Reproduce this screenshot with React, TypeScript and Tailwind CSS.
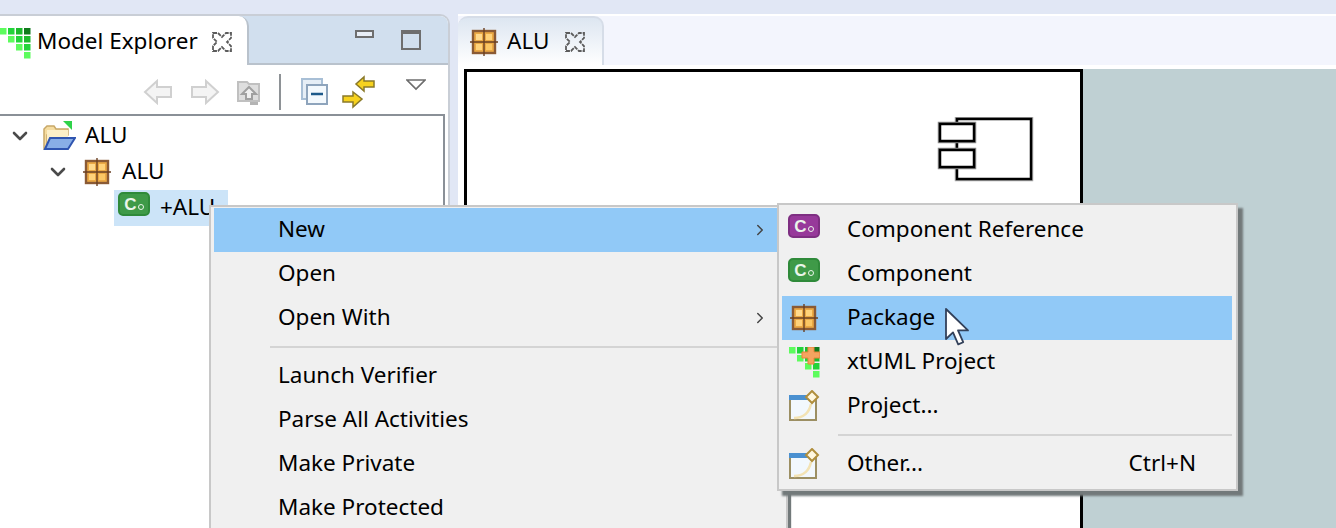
import { ChevronDown, ChevronRight } from 'lucide-react';

const uiFont = "font-['Noto_Sans',sans-serif]";

function CloseIcon({ size = 20 }: { size?: number }) {
  return (
    <svg width={size} height={size} viewBox="0 0 20 20" className="shrink-0">
      <polygon
        points="1,1 6,1 10,5 14,1 19,1 19,6 15,10 19,14 19,19 14,19 10,15 6,19 1,19 1,14 5,10 1,6"
        fill="none"
        stroke="#5c5c5c"
        strokeWidth="1.8"
        strokeDasharray="4 1"
      />
    </svg>
  );
}

function PackageIcon() {
  return (
    <svg width="28" height="28" viewBox="0 0 28 28" className="shrink-0">
      <rect x="3" y="3" width="22" height="22" fill="#eba945" stroke="#8a5a35" strokeWidth="2.4" />
      <rect x="6" y="6" width="6" height="6" fill="#ffd98c" />
      <rect x="16" y="6" width="6" height="6" fill="#ffd27a" />
      <rect x="6" y="16" width="6" height="6" fill="#ffd27a" />
      <rect x="16" y="16" width="6" height="6" fill="#fbc765" />
      <path d="M14 0v28M0 14h28" stroke="#6a3f22" strokeWidth="1.4" />
    </svg>
  );
}

function ComponentIcon({ color, edge }: { color: string; edge: string }) {
  const cls = color === 'green' ? 'bg-[#3f9a48]' : 'bg-[#97399a]';
  return (
    <div className={`flex h-[24px] w-[32px] shrink-0 items-center justify-center gap-[1px] rounded-[5px] border-2 ${cls}`} style={{ borderColor: edge }}>
      <span className="font-['Liberation_Sans',sans-serif] text-[17px] leading-none font-bold text-[#eaf5ea]">C</span>
      <span className="mt-[6px] h-[6px] w-[6px] rounded-full border border-[#eaf5ea]" />
    </div>
  );
}

function ModelDots({ plus }: { plus?: boolean }) {
  const cells = [
    [0, 0, '#5dfc5d'], [8, 0, '#22d43a'], [16, 0, '#1cba2c'], [24, 0, '#0f7a1c'],
    [8, 8, '#5dfc5d'], [16, 8, '#22d43a'], [24, 8, '#1cba2c'],
    [16, 16, '#5dfc5d'], [24, 16, '#22d43a'],
    [24, 24, '#5dfc5d'],
  ] as const;
  return (
    <svg width="31" height="31" viewBox="0 0 31 31" className="shrink-0">
      {cells.map(([x, y, fill], i) => (
        <rect key={i} x={x} y={y} width="6.5" height="6.5" fill={fill} />
      ))}
      {plus && <path d="M19 0h6v5h6v6h-6v6h-6v-6h-6V5h6z" fill="#f4a460" stroke="#e8843a" strokeWidth="1" />}
    </svg>
  );
}

function NewWindowIcon() {
  return (
    <svg width="32" height="32" viewBox="0 0 32 32" className="shrink-0">
      <rect x="2" y="6" width="26" height="24" fill="#f2f8fd" stroke="#9c8f63" strokeWidth="2" />
      <rect x="1" y="5" width="27" height="5" fill="#4a90d0" />
      <path d="M6 28c10 0 15-5 17-14" stroke="#f3e3b4" strokeWidth="2.5" fill="none" />
      <path d="M24 1l6 6-6 6-6-6z" fill="#fff7df" stroke="#b08e3c" strokeWidth="2" />
    </svg>
  );
}

function FolderIcon() {
  return (
    <svg width="34" height="30" viewBox="0 0 34 30" className="shrink-0">
      <path d="M2 8l3-3h7l2 3h12v6H5v14H2z" fill="#f5dca0" stroke="#c8a868" strokeWidth="1.5" />
      <path d="M5 9h21v12H5z" fill="#fcefc8" />
      <path d="M3 28l5-11h25l-7 11z" fill="#88aee6" stroke="#2f55b0" strokeWidth="2" />
      <path d="M21 0h9v9z" fill="#2fd24a" />
    </svg>
  );
}

function Toolbar() {
  return (
    <div className="flex h-[49px] items-center bg-white pt-[4px] pl-[143px]">
      <svg width="30" height="26" viewBox="0 0 30 26" className="shrink-0">
        <path d="M14 2L2 13l12 11v-6h14V8H14z" fill="#f4f4f4" stroke="#d0d0d0" strokeWidth="2" />
      </svg>
      <svg width="30" height="26" viewBox="0 0 30 26" className="ml-[17px] shrink-0">
        <path d="M16 2l12 11-12 11v-6H2V8h14z" fill="#f4f4f4" stroke="#d0d0d0" strokeWidth="2" />
      </svg>
      <svg width="26" height="28" viewBox="0 0 26 28" className="ml-[16px] shrink-0">
        <path d="M2 4h9l2 2h10v17H2z" fill="#dedede" stroke="#c0c0c0" strokeWidth="2" />
        <path d="M13 9l7 7h-4v5h-6v-5H6z" fill="#efefef" stroke="#a0a0a0" strokeWidth="2" />
        <path d="M14 24h8v3h-8z" fill="#b4b4b4" />
      </svg>
      <div className="ml-[17px] h-[36px] w-[2px] bg-[#8e9296]" />
      <svg width="27" height="27" viewBox="0 0 27 27" className="ml-[20px] shrink-0">
        <rect x="1" y="1" width="20" height="20" fill="#e6eef6" stroke="#a8bfd6" strokeWidth="2" />
        <rect x="6" y="7" width="20" height="19" fill="#f4f9fd" stroke="#8ea4bc" strokeWidth="2" />
        <path d="M10 16h12" stroke="#1e5a8a" strokeWidth="2.5" />
      </svg>
      <svg width="34" height="34" viewBox="0 0 34 34" className="ml-[14px] shrink-0">
        <path d="M22 2v4h10v6H22v4l-8-7z" fill="#f7d21e" stroke="#8a7a2a" strokeWidth="1.5" />
        <path d="M11 17v4H1v6h10v5l9-8z" fill="#f7d21e" stroke="#8a7a2a" strokeWidth="1.5" />
      </svg>
      <svg width="20" height="12" viewBox="0 0 20 12" className="mb-[14px] ml-[30px] shrink-0">
        <path d="M1 1h18L10 10z" fill="#fff" stroke="#6e6e6e" strokeWidth="1.6" />
      </svg>
    </div>
  );
}

function ExplorerPanel() {
  return (
    <div className="flex w-[450px] shrink-0 flex-col overflow-hidden rounded-tr-[10px] border-t-2 border-r-2 border-[#c9ced6] bg-white">
      <div className="flex h-[49px] shrink-0 bg-[#d1dfee]">
        <div className="flex w-[249px] items-center rounded-tr-[10px] border-r-2 border-[#b9c2cc] bg-white pt-[2px]">
          <div className="mt-[4px] ml-0">
            <ModelDots />
          </div>
          <span className={`${uiFont} ml-[6px] text-[22.5px] leading-none text-black`}>Model Explorer</span>
          <div className="ml-[14px]">
            <CloseIcon />
          </div>
        </div>
        <div className="flex flex-1 items-start border-b-2 border-[#b9c2cc] pt-[14px]">
          <div className="ml-[106px] h-[8px] w-[19px] border-2 border-[#6e6e6e] bg-[#e8eef6]" />
          <div className="ml-[27px] h-[20px] w-[20px] border-2 border-t-[4px] border-[#6e6e6e]" />
        </div>
      </div>
      <Toolbar />
      <div className="mr-[3px] flex-1 border-t-2 border-r-2 border-[#8a9097] bg-white pt-[2px]">
        <div className="flex h-[36px] items-center pl-[8px]">
          <ChevronDown size={24} strokeWidth={2.6} className="text-[#4a4a4a]" />
          <div className="ml-[10px]">
            <FolderIcon />
          </div>
          <span className={`${uiFont} ml-[9px] pb-[3px] text-[22.5px] text-black`}>ALU</span>
        </div>
        <div className="flex h-[36px] items-center pl-[46px]">
          <ChevronDown size={24} strokeWidth={2.6} className="text-[#4a4a4a]" />
          <div className="ml-[13px]">
            <PackageIcon />
          </div>
          <span className={`${uiFont} ml-[11px] pb-[3px] text-[22.5px] text-black`}>ALU</span>
        </div>
        <div className="ml-[114px] flex h-[36px] w-[114px] items-start bg-[#cce4f8] pt-[2px] pl-[4px]">
          <ComponentIcon color="green" edge="#2f8a3a" />
          <span className={`${uiFont} ml-[10px] text-[22.5px] leading-[30px] text-black`}>+ALU</span>
        </div>
      </div>
    </div>
  );
}

function EditorPanel() {
  return (
    <div className="flex min-w-0 flex-1 flex-col pl-[8px]">
      <div className="flex h-[51px] shrink-0 border-t-2 border-white bg-[#f3f5fd]">
        <div className="flex w-[146px] items-center rounded-t-[10px] border-t-2 border-r-2 border-[#d6dde8] bg-gradient-to-b from-[#dde6f1] to-white pl-[12px]">
          <PackageIcon />
          <span className={`${uiFont} ml-[9px] text-[22.5px] leading-none text-black`}>ALU</span>
          <div className="ml-[16px]">
            <CloseIcon />
          </div>
        </div>
      </div>
      <div className="flex flex-1 bg-white pt-[4px] pl-[6px]">
        <div className="flex flex-1 items-start justify-between">
          <div className="h-[500px] w-[619px] border-[3px] border-b-0 border-black bg-white pt-[45px] pl-[470px]">
            <svg width="98" height="66" viewBox="0 0 98 66">
              <path d="M20 2h74v60H20z" fill="#fff" stroke="#a8a8a8" strokeWidth="4.5" />
              <path d="M20 2h74v60H20z" fill="#fff" stroke="#000" strokeWidth="2.5" />
              <rect x="3" y="7" width="34" height="17" fill="#fff" stroke="#8c8c8c" strokeWidth="4.5" />
              <rect x="3" y="7" width="34" height="17" fill="#fff" stroke="#000" strokeWidth="2.5" />
              <rect x="3" y="33" width="34" height="17" fill="#fff" stroke="#8c8c8c" strokeWidth="4.5" />
              <rect x="3" y="33" width="34" height="17" fill="#fff" stroke="#000" strokeWidth="2.5" />
            </svg>
          </div>
          <div className="h-full flex-1 bg-[#bfd0d3]" />
        </div>
      </div>
    </div>
  );
}

function MenuRow({ label, active, icon, submenu, shortcut, textLeft }: { label: string; active?: boolean; icon?: React.ReactNode; submenu?: boolean; shortcut?: string; textLeft: string }) {
  return (
    <div className={`flex h-[44px] items-center ${active ? 'bg-[#91c9f7]' : ''}`}>
      <div className={`flex h-full shrink-0 items-center justify-center ${textLeft}`}>{icon}</div>
      <span className={`${uiFont} pb-[2px] text-[22.5px] leading-none text-black`}>{label}</span>
      {shortcut && <span className={`${uiFont} mr-[36px] ml-auto pb-[2px] text-[22.5px] leading-none text-black`}>{shortcut}</span>}
      {submenu && <ChevronRight size={18} strokeWidth={2} className="mr-[16px] ml-auto text-[#444]" />}
    </div>
  );
}

function ContextMenu() {
  return (
    <div className="absolute top-[205px] left-[209px] h-[340px] w-[579px] border-2 border-b-0 border-[#c8c8c8] bg-[#f0f0f0] pt-[1px] pr-[1px] pl-[3px] shadow-[3px_3px_1px_#72797a]">
      <MenuRow label="New" active submenu textLeft="w-[64px]" />
      <MenuRow label="Open" textLeft="w-[64px]" />
      <MenuRow label="Open With" submenu textLeft="w-[64px]" />
      <div className="mt-[6px] mb-[6px] ml-[56px] h-[2px] bg-[#d4d4d4]" />
      {['Launch Verifier', 'Parse All Activities', 'Make Private', 'Make Protected'].map((label) => (
        <MenuRow key={label} label={label} textLeft="w-[64px]" />
      ))}
    </div>
  );
}

function SubMenu() {
  const w = 'w-[44px] mr-[21px]';
  return (
    <div className="absolute top-[203px] left-[777px] h-[288px] w-[461px] border-2 border-[#c8c8c8] bg-[#f0f0f0] pt-[3px] pr-[4px] pl-[3px] shadow-[5px_5px_2px_#72797a]">
      <MenuRow label="Component Reference" textLeft={w} icon={<div className="mb-[8px]"><ComponentIcon color="purple" edge="#7e2f82" /></div>} />
      <MenuRow label="Component" textLeft={w} icon={<div className="mb-[8px]"><ComponentIcon color="green" edge="#2f8a3a" /></div>} />
      <MenuRow label="Package" active textLeft={w} icon={<PackageIcon />} />
      <MenuRow label="xtUML Project" textLeft={w} icon={<ModelDots plus />} />
      <MenuRow label="Project..." textLeft={w} icon={<NewWindowIcon />} />
      <div className="mt-[6px] mb-[6px] ml-[56px] h-[2px] bg-[#d4d4d4]" />
      <MenuRow label="Other..." shortcut="Ctrl+N" textLeft={w} icon={<NewWindowIcon />} />
    </div>
  );
}

function Cursor() {
  return (
    <svg width="28" height="40" viewBox="0 0 14 20" className="absolute top-[307px] left-[944px]">
      <path d="M1 1v15l3.5-3.3 2.6 6 2.5-1.1-2.6-5.9H12z" fill="#fff" stroke="#33415a" strokeWidth="0.9" strokeLinejoin="round" />
    </svg>
  );
}

export default function App() {
  return (
    <div className="relative flex h-[528px] w-[1336px] flex-col overflow-hidden bg-[#e1e7f5]">
      <div className="h-[14px] shrink-0" />
      <div className="flex min-h-0 flex-1">
        <ExplorerPanel />
        <EditorPanel />
      </div>
      <ContextMenu />
      <SubMenu />
      <Cursor />
    </div>
  );
}
